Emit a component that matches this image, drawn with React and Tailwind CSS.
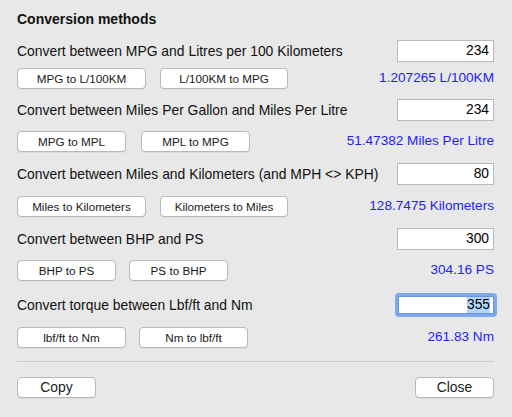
const font = { fontFamily: '"Liberation Sans", Arial, sans-serif' };

function Btn({ children, w, className = '' }) {
  return (
    <button
      type="button"
      className={`h-[21px] shrink-0 rounded-[4px] border border-[#b8b8b8] bg-white text-[11.7px] text-[#1a1a1a] leading-none shadow-[0_1px_0_rgba(0,0,0,0.05)] ${w} ${className}`}
    >
      {children}
    </button>
  );
}

function Field({ value, focused }) {
  if (focused) {
    return (
      <div className="rounded-[4px] bg-[#7fa9ee] p-[3px] -mr-[3px]">
        <div className="flex h-[18px] w-[96px] items-center justify-end border border-[#6a95d8] bg-white pr-[3px] text-[13.8px] text-black">
          <span className="bg-[#b4d3fb] leading-[16px]">{value}</span>
        </div>
      </div>
    );
  }
  return (
    <div className="flex h-[22px] w-[97px] items-center justify-end border border-[#b9b9b9] bg-white pr-[4px] text-[13.8px] text-black">
      {value}
    </div>
  );
}

const rows = [
  {
    label: 'Convert between MPG and Litres per 100 Kilometers',
    value: '234',
    buttons: [['MPG to L/100KM', 'w-[129px]'], ['L/100KM to MPG', 'w-[128px]']],
    gap: 'gap-[14px]',
    result: '1.207265 L/100KM',
    top: 'mt-[13px]',
    btnTop: 'mt-[6px]',
  },
  {
    label: 'Convert between Miles Per Gallon and Miles Per Litre',
    value: '234',
    buttons: [['MPG to MPL', 'w-[109px]'], ['MPL to MPG', 'w-[109px]']],
    gap: 'gap-[15px]',
    result: '51.47382 Miles Per Litre',
    top: 'mt-[10px]',
    btnTop: 'mt-[10px]',
  },
  {
    label: 'Convert between Miles and Kilometers (and MPH <> KPH)',
    value: '80',
    buttons: [['Miles to Kilometers', 'w-[129px]'], ['Kilometers to Miles', 'w-[128px]']],
    gap: 'gap-[14px]',
    result: '128.7475 Kilometers',
    top: 'mt-[11px]',
    btnTop: 'mt-[11px]',
  },
  {
    label: 'Convert between BHP and PS',
    value: '300',
    buttons: [['BHP to PS', 'w-[99px]'], ['PS to BHP', 'w-[99px]']],
    gap: 'gap-[13px]',
    result: '304.16 PS',
    top: 'mt-[11px]',
    btnTop: 'mt-[10px]',
  },
  {
    label: 'Convert torque between Lbf/ft and Nm',
    value: '355',
    focused: true,
    buttons: [['lbf/ft to Nm', 'w-[109px]'], ['Nm to lbf/ft', 'w-[109px]']],
    gap: 'gap-[13px]',
    result: '261.83 Nm',
    top: 'mt-[13px]',
    btnTop: 'mt-[11px]',
  },
];

export default function App() {
  return (
    <div
      style={font}
      className="flex h-[417px] w-[512px] flex-col overflow-hidden bg-[#e8e8e8] pl-[17px] pr-[18px] pt-[11px] text-[#111]"
    >
      <h1 className="text-[14px] font-bold leading-[16px]">Conversion methods</h1>

      {rows.map((row) => (
        <section key={row.label} className={`flex flex-col ${row.top}`}>
          <div className="flex h-[22px] items-center justify-between">
            <span className="text-[13.9px]">{row.label}</span>
            <Field value={row.value} focused={row.focused} />
          </div>
          <div className={`flex items-center ${row.btnTop} ${row.gap}`}>
            {row.buttons.map(([text, w]) => (
              <Btn key={text} w={w}>
                {text}
              </Btn>
            ))}
            <span className="ml-auto text-[13.6px] text-[#1f1ff2]">{row.result}</span>
          </div>
        </section>
      ))}

      <div className="mt-[13px] h-px shrink-0 bg-[#cdcdcd]" />

      <div className="mt-[15px] flex justify-between">
        <Btn w="w-[79px] text-[13.9px]">Copy</Btn>
        <Btn w="w-[79px] text-[13.9px]">Close</Btn>
      </div>
    </div>
  );
}
